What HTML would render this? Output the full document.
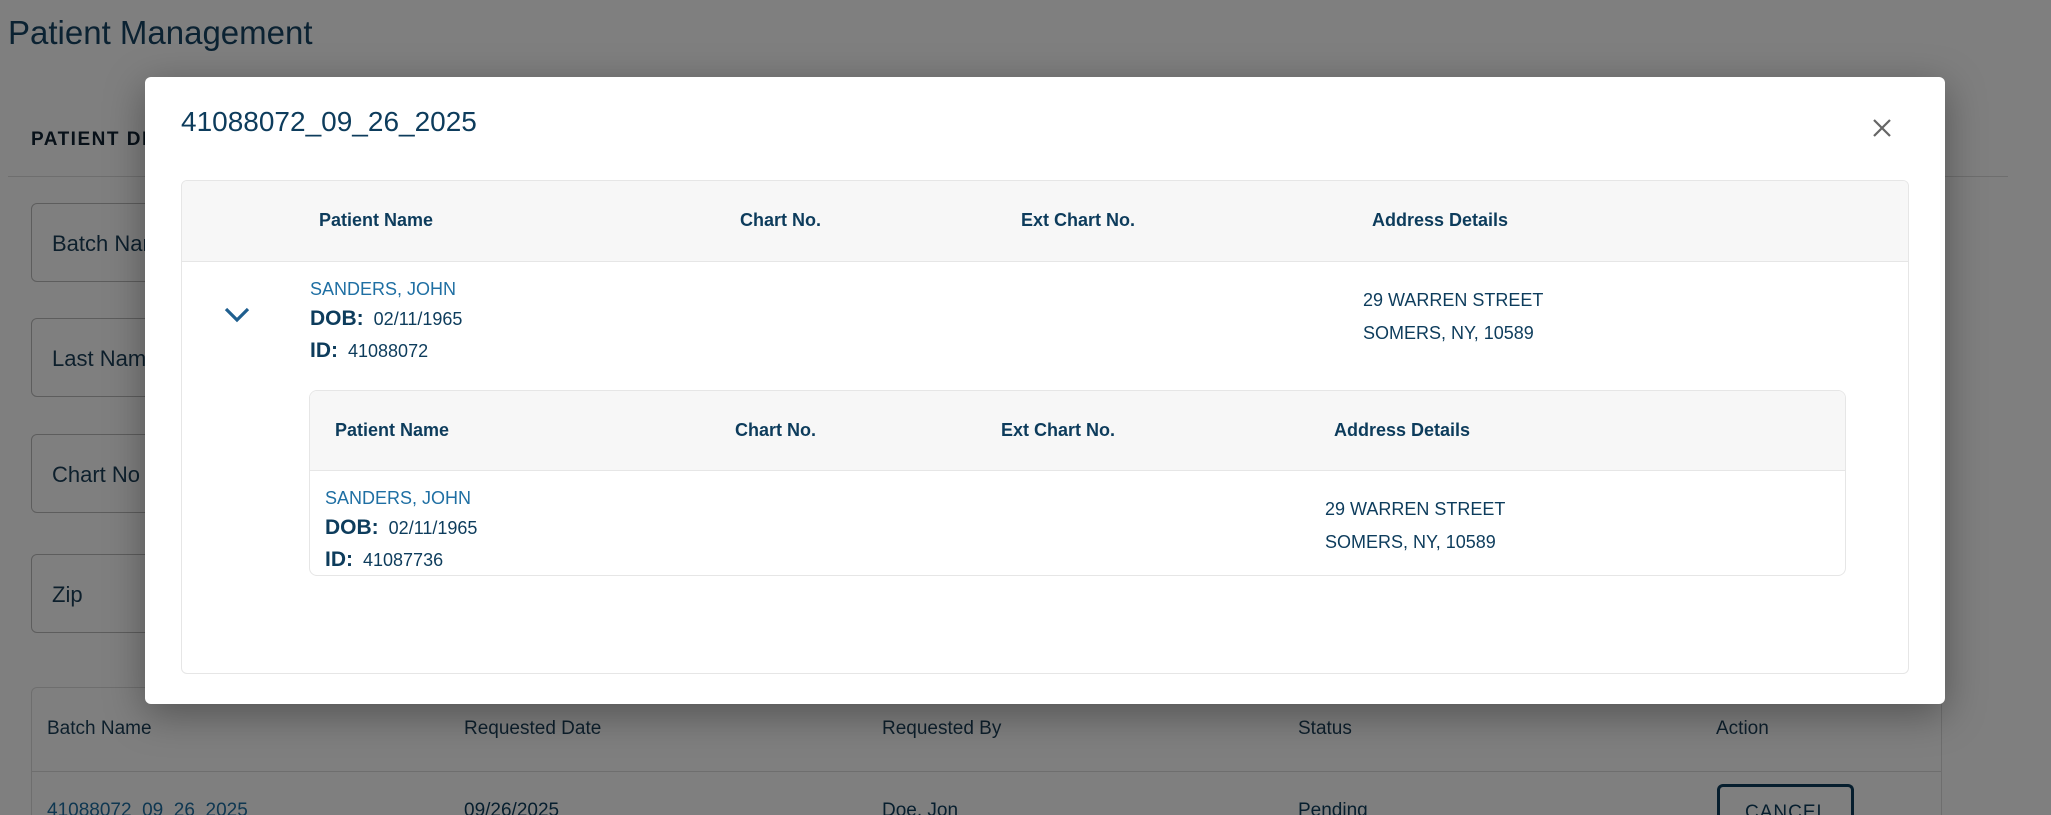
<!DOCTYPE html>
<html><head><meta charset="utf-8"><style>
*{box-sizing:border-box;margin:0;padding:0}
html,body{width:2051px;height:815px;overflow:hidden;background:#fff}
#w{position:relative;width:2051px;height:815px;overflow:hidden;font-family:"Liberation Sans",sans-serif;color:#0d3c5c}
.a{position:absolute;white-space:nowrap}
.ov{position:absolute;left:0;top:0;width:2051px;height:815px;background:rgba(0,0,0,0.5)}
.inp{position:absolute;left:31px;width:300px;height:79px;border:1px solid #bbb;border-radius:6px;font-size:22px;color:#1b3f58;padding:27px 0 0 20px}
.modal{position:absolute;left:145px;top:77px;width:1800px;height:627px;background:#fff;border-radius:6px;box-shadow:0 10px 40px rgba(0,0,0,.35)}
.th{font-weight:bold;font-size:18px;color:#0d3c5c}
.t{font-size:18px;color:#0d3c5c}
.lk{font-size:18px;color:#1f6fa3}
.b{font-weight:bold;font-size:21px}
</style></head><body><div id="w">
<div class="a" style="left:8px;top:14px;font-size:33px;color:#164565">Patient Management</div>
<div class="a" style="left:31px;top:129px;font-size:19px;font-weight:bold;letter-spacing:1.5px;color:#123">PATIENT DETAILS</div>
<div class="a" style="left:8px;top:176px;width:2000px;height:1px;background:#ddd"></div>
<div class="inp" style="top:203px">Batch Name</div>
<div class="inp" style="top:318px">Last Name</div>
<div class="inp" style="top:434px">Chart No</div>
<div class="inp" style="top:554px">Zip</div>
<div class="a" style="left:31px;top:687px;width:1911px;height:128px;border:1px solid #ddd;border-bottom:none;border-radius:6px 6px 0 0"></div>
<div class="a" style="left:31px;top:771px;width:1911px;height:1px;background:#ddd"></div>
<div class="a t" style="left:47px;top:718px;font-size:19px;color:#1b3f58">Batch Name</div>
<div class="a t" style="left:464px;top:718px;font-size:19px;color:#1b3f58">Requested Date</div>
<div class="a t" style="left:882px;top:718px;font-size:19px;color:#1b3f58">Requested By</div>
<div class="a t" style="left:1298px;top:718px;font-size:19px;color:#1b3f58">Status</div>
<div class="a t" style="left:1716px;top:718px;font-size:19px;color:#1b3f58">Action</div>
<div class="a" style="left:47px;top:800px;font-size:19px;color:#1f6fa3;height:15px;overflow:hidden">41088072_09_26_2025</div>
<div class="a t" style="left:464px;top:800px;font-size:19px;height:15px;overflow:hidden">09/26/2025</div>
<div class="a t" style="left:882px;top:800px;font-size:19px;height:15px;overflow:hidden">Doe, Jon</div>
<div class="a t" style="left:1298px;top:800px;font-size:19px;height:15px;overflow:hidden">Pending</div>
<div class="a" style="left:1717px;top:784px;width:137px;height:31px;border:3px solid #0d3c5c;border-bottom:none;border-radius:6px 6px 0 0;font-size:19px;letter-spacing:1px;padding:15px 0 0 25px;overflow:hidden">CANCEL</div>
<div class="ov"></div>
<div class="modal">
<div class="a" style="left:36px;top:29px;font-size:28px;color:#0d3c5c">41088072_09_26_2025</div>
<svg class="a" style="left:1727px;top:41px" width="20" height="20" viewBox="0 0 20 20"><path d="M2 2L18 18M18 2L2 18" stroke="#666" stroke-width="2.2"/></svg>
<div class="a" style="left:36px;top:103px;width:1728px;height:494px;border:1px solid #e6e6e6;border-radius:6px;overflow:hidden">
<div class="a" style="left:0;top:0;width:1728px;height:81px;background:#f7f7f7;border-bottom:1px solid #e6e6e6"></div>
<div class="a th" style="left:137px;top:29px">Patient Name</div>
<div class="a th" style="left:558px;top:29px">Chart No.</div>
<div class="a th" style="left:839px;top:29px">Ext Chart No.</div>
<div class="a th" style="left:1190px;top:29px">Address Details</div>
<svg class="a" style="left:41px;top:125px" width="28" height="18" viewBox="0 0 28 18"><path d="M3 3L14 14L25 3" stroke="#1f5f8f" stroke-width="3.2" fill="none"/></svg>
<div class="a lk" style="left:128px;top:98px">SANDERS, JOHN</div>
<div class="a t" style="left:128px;top:126px"><span class="b">DOB:</span>&nbsp; 02/11/1965</div>
<div class="a t" style="left:128px;top:158px"><span class="b">ID:</span>&nbsp; 41088072</div>
<div class="a t" style="left:1181px;top:109px">29 WARREN STREET</div>
<div class="a t" style="left:1181px;top:142px">SOMERS, NY, 10589</div>
<div class="a" style="left:127px;top:209px;width:1537px;height:186px;border:1px solid #e6e6e6;border-radius:8px;overflow:hidden">
<div class="a" style="left:0;top:0;width:1537px;height:80px;background:#f7f7f7;border-bottom:1px solid #e6e6e6"></div>
<div class="a th" style="left:25px;top:29px">Patient Name</div>
<div class="a th" style="left:425px;top:29px">Chart No.</div>
<div class="a th" style="left:691px;top:29px">Ext Chart No.</div>
<div class="a th" style="left:1024px;top:29px">Address Details</div>
<div class="a lk" style="left:15px;top:97px">SANDERS, JOHN</div>
<div class="a t" style="left:15px;top:125px"><span class="b">DOB:</span>&nbsp; 02/11/1965</div>
<div class="a t" style="left:15px;top:157px"><span class="b">ID:</span>&nbsp; 41087736</div>
<div class="a t" style="left:1015px;top:108px">29 WARREN STREET</div>
<div class="a t" style="left:1015px;top:141px">SOMERS, NY, 10589</div>
</div>
</div>
</div>
</div></body></html>
